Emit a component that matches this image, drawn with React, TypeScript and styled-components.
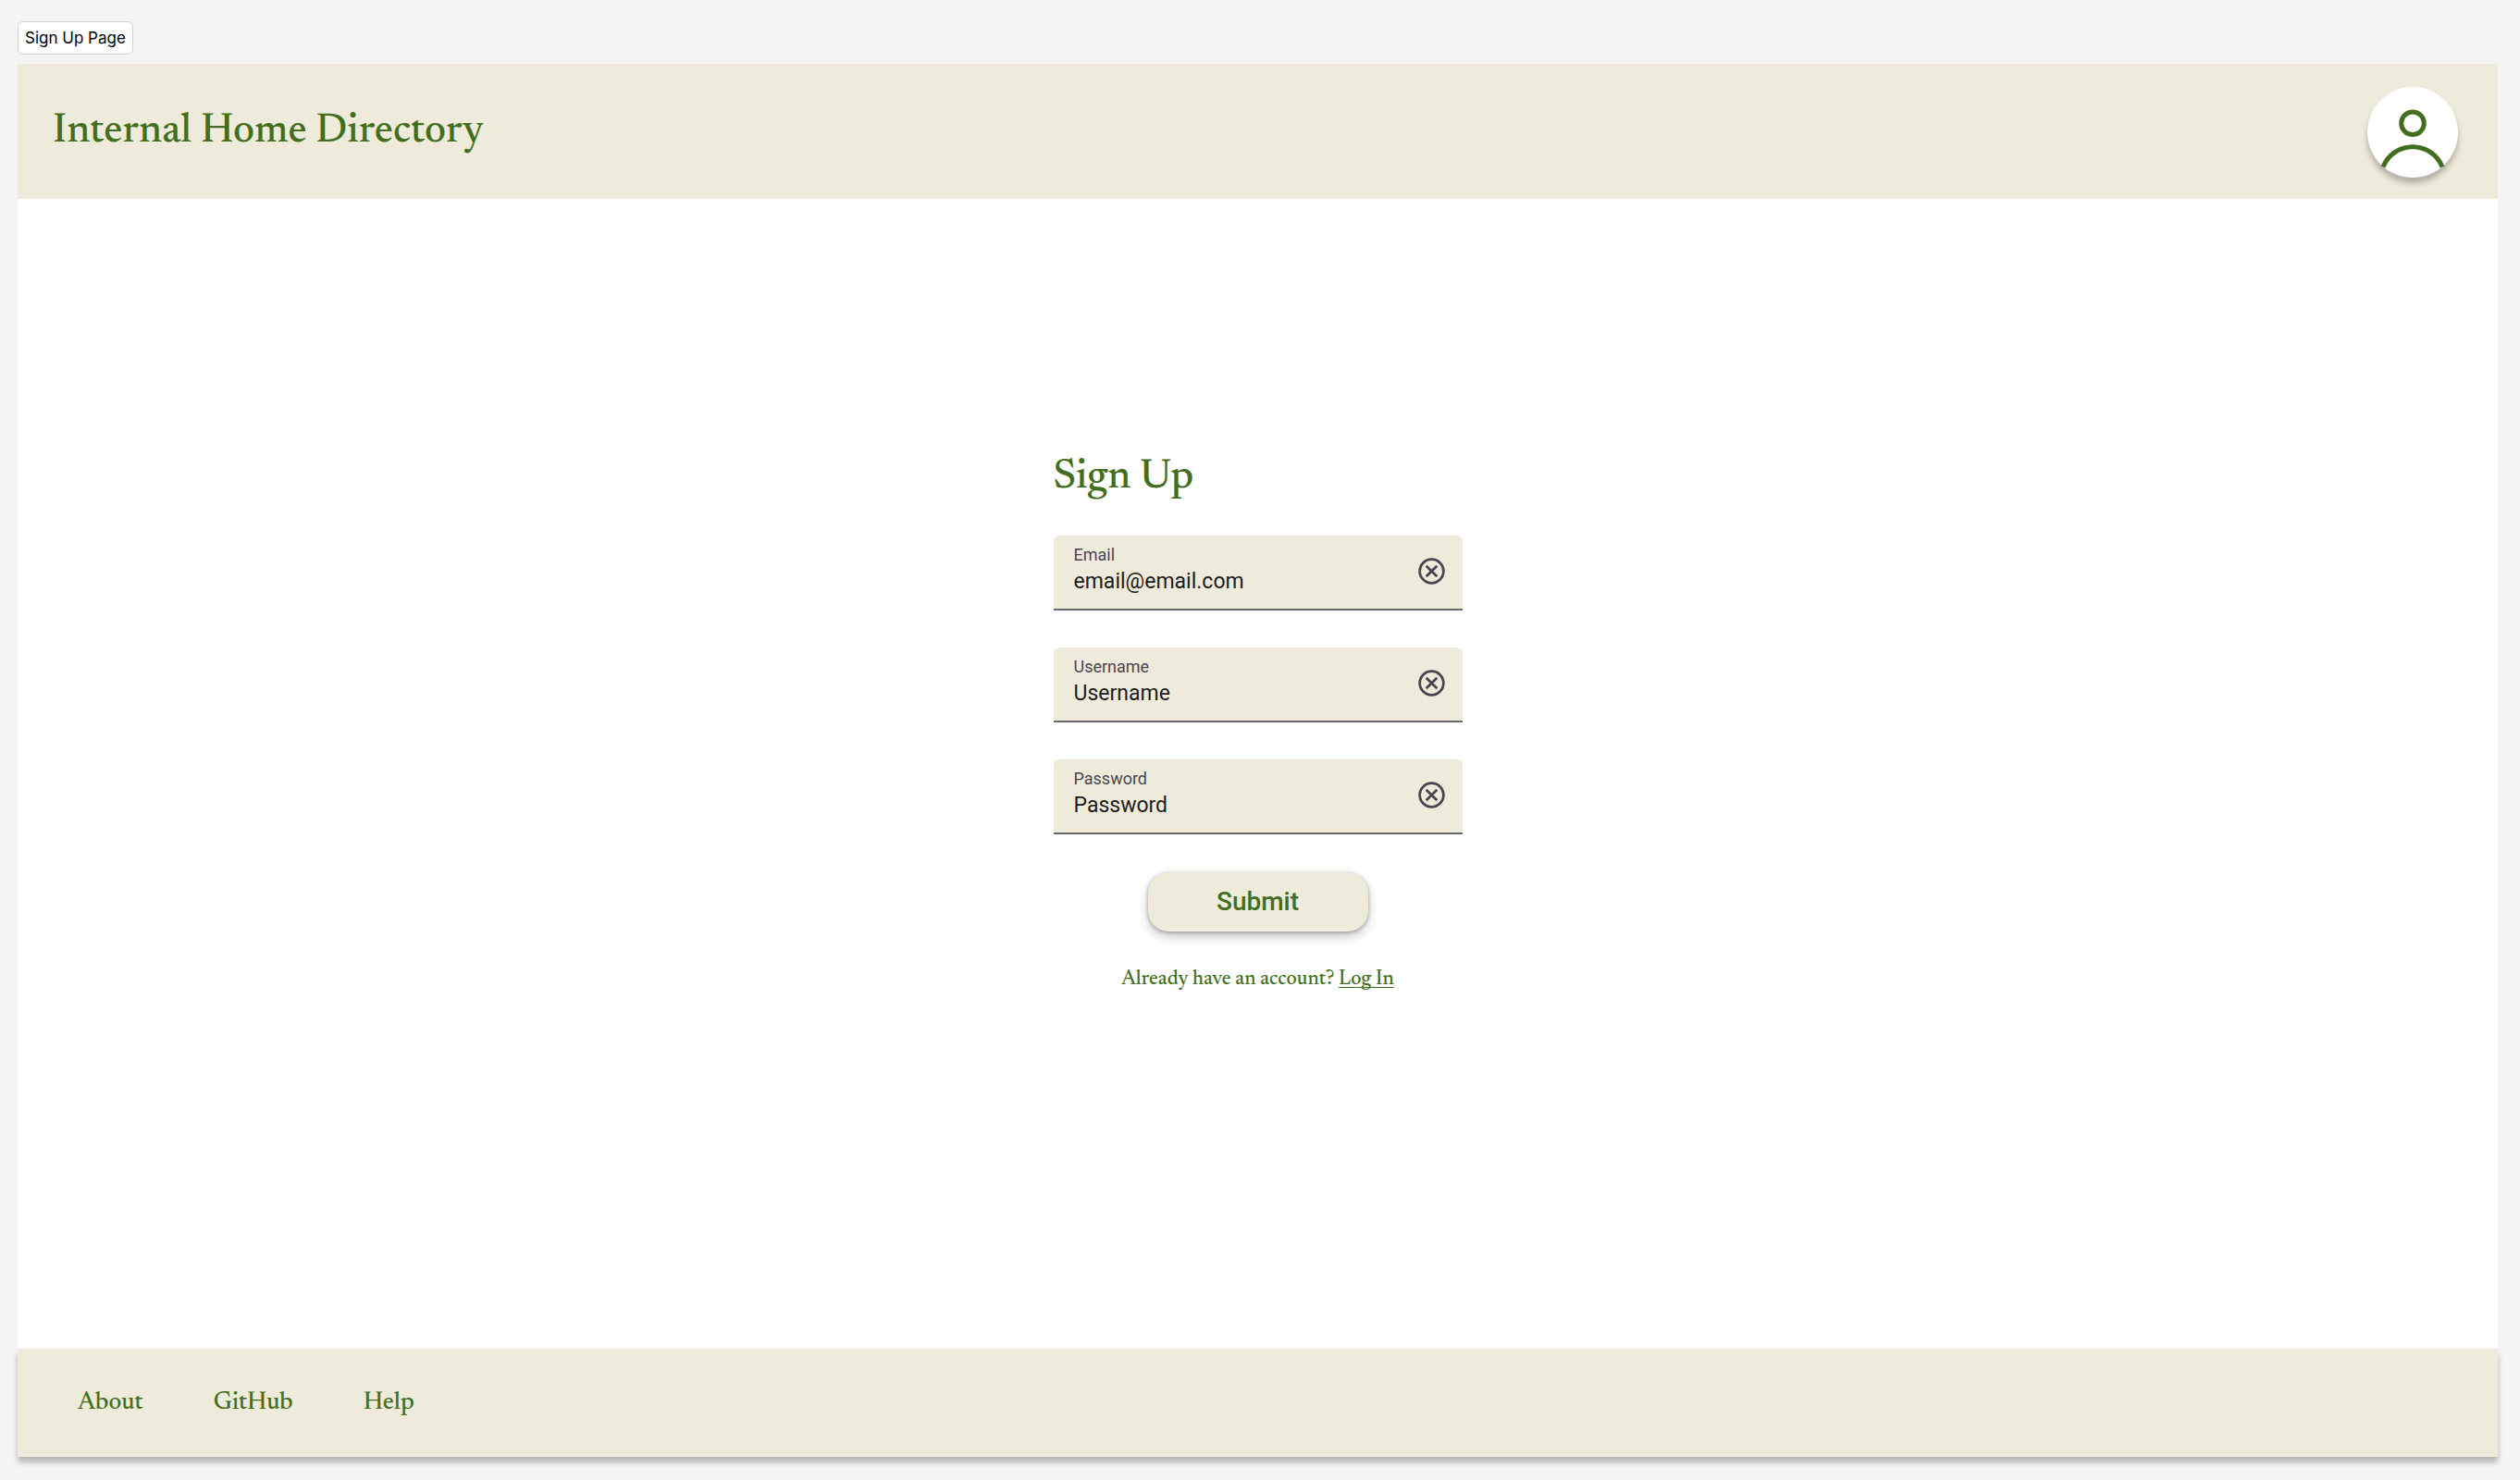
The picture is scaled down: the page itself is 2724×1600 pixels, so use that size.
import React from "react";
import styled, { createGlobalStyle } from "styled-components";

const green = "#436e20";
const beige = "#efebdb";
const serif = `"Newsreader", "Liberation Serif", "Times New Roman", serif`;
const sans = `Roboto, "Liberation Sans", sans-serif`;

const GlobalStyle = createGlobalStyle`
  * { box-sizing: border-box; }
  body { margin: 0; background: #f4f4f4; }
  button, input { font: inherit; }
`;

const Canvas = styled.div`
  display: flex;
  flex-direction: column;
  min-height: 100vh;
  padding: 23px 24px 25px 19px;
`;

const FrameLabel = styled.div`
  align-self: flex-start;
  height: 36px;
  margin-bottom: 10px;
  padding: 0 7px;
  border: 1px solid #d2d2d2;
  border-radius: 6px;
  background: #fff;
  color: #000;
  font: 400 17px/34px Inter, sans-serif;
`;

const Page = styled.div`
  flex: 1;
  display: flex;
  flex-direction: column;
  background: #fff;
`;

const Header = styled.header`
  display: flex;
  align-items: center;
  justify-content: space-between;
  height: 146px;
  padding: 2px 43px 0 38px;
  background: ${beige};
`;

const Heading = styled.h1`
  margin: 0;
  color: ${green};
  font: 500 45px/44px ${serif};
`;

const Subheading = styled.h2`
  margin: 0;
  color: ${green};
  font: 500 45px/44px ${serif};
`;

const AvatarButton = styled.button`
  width: 98px;
  height: 98px;
  padding: 0;
  border: 0;
  border-radius: 50%;
  background: #fff;
  box-shadow: 0 6px 6px rgba(0, 0, 0, 0.25);
  cursor: pointer;

  svg { display: block; }
`;

const Main = styled.main`
  flex: 1;
  display: flex;
  justify-content: center;
  align-items: flex-start;
  padding-top: 280px;
`;

const Form = styled.form`
  display: flex;
  flex-direction: column;
  align-items: center;
  gap: 41px;
  width: 442px;
`;

const Fields = styled.div`
  display: flex;
  flex-direction: column;
  gap: 40px;
  width: 100%;
`;

const Field = styled.div`
  display: flex;
  align-items: center;
  height: 81px;
  padding: 0 16px 2px 22px;
  border-bottom: 2px solid #6a676d;
  border-radius: 6px 6px 0 0;
  background: ${beige};
`;

const FieldText = styled.div`
  flex: 1;
  display: flex;
  flex-direction: column;
  min-width: 0;
  padding-bottom: 2px;
`;

const Label = styled.label`
  color: #49454f;
  font: 400 18px/24px ${sans};
`;

const Input = styled.input`
  width: 100%;
  height: 34px;
  padding: 0;
  border: 0;
  outline: 0;
  background: transparent;
  color: #1d1b20;
  font: 400 23px/34px ${sans};

  &::placeholder { color: #1d1b20; opacity: 1; }
`;

const ClearButton = styled.button`
  width: 35px;
  height: 35px;
  padding: 0;
  border: 0;
  background: none;
  cursor: pointer;

  svg { display: block; }
`;

const SubmitButton = styled.button`
  width: 238px;
  height: 64px;
  padding: 0;
  border: 0;
  border-radius: 22px;
  background: ${beige};
  box-shadow: 0 6px 12px rgba(0, 0, 0, 0.2), 0 1px 4px rgba(0, 0, 0, 0.3);
  color: ${green};
  font: 500 28px/36px ${sans};
  cursor: pointer;
`;

const Prompt = styled.p`
  margin: 0;
  color: ${green};
  font: 500 22px/22px ${serif};

  a {
    color: inherit;
    text-decoration: underline;
    text-decoration-thickness: 1px;
    text-underline-offset: 3px;
    text-decoration-skip-ink: none;
  }
`;

const Footer = styled.footer`
  display: flex;
  align-items: center;
  gap: 76px;
  height: 117px;
  padding: 0 65px;
  background: ${beige};
  box-shadow: 0 6px 6px rgba(0, 0, 0, 0.25);
`;

const FooterLink = styled.a`
  color: ${green};
  font: 500 27px/36px ${serif};
  text-decoration: none;
`;

const fields = [
  { id: "email", label: "Email", type: "email", value: "email@email.com" },
  { id: "username", label: "Username", type: "text", value: "Username" },
  { id: "password", label: "Password", type: "password", placeholder: "Password" },
];

function CancelIcon() {
  return (
    <svg width="35" height="35" viewBox="0 0 24 24" fill="none" stroke="#49454f" strokeWidth="1.9" aria-hidden="true">
      <circle cx="12" cy="12" r="8.8" />
      <path d="M8 8l8 8M16 8l-8 8" />
    </svg>
  );
}

function PersonIcon() {
  return (
    <svg width="98" height="98" viewBox="0 0 98 98" fill="none" stroke={green} strokeWidth="5" aria-hidden="true">
      <circle cx="49" cy="39.2" r="12.3" />
      <path d="M17 86.5A34.4 34.4 0 0 1 81 86.5" />
    </svg>
  );
}

export default function App() {
  return (
    <>
      <GlobalStyle />
      <Canvas>
        <FrameLabel>Sign Up Page</FrameLabel>
        <Page>
          <Header>
            <Heading>Internal Home Directory</Heading>
            <AvatarButton type="button" aria-label="Account">
              <PersonIcon />
            </AvatarButton>
          </Header>
          <Main>
            <Form onSubmit={(e) => e.preventDefault()}>
              <Fields>
                <Subheading>Sign Up</Subheading>
                {fields.map((f) => (
                  <Field key={f.id}>
                    <FieldText>
                      <Label htmlFor={f.id}>{f.label}</Label>
                      <Input id={f.id} type={f.type} defaultValue={f.value} placeholder={f.placeholder} />
                    </FieldText>
                    <ClearButton type="button" aria-label={`Clear ${f.label}`}>
                      <CancelIcon />
                    </ClearButton>
                  </Field>
                ))}
              </Fields>
              <SubmitButton type="submit">Submit</SubmitButton>
              <Prompt>
                Already have an account? <a href="#login">Log In</a>
              </Prompt>
            </Form>
          </Main>
          <Footer>
            <FooterLink href="#about">About</FooterLink>
            <FooterLink href="#github">GitHub</FooterLink>
            <FooterLink href="#help">Help</FooterLink>
          </Footer>
        </Page>
      </Canvas>
    </>
  );
}
